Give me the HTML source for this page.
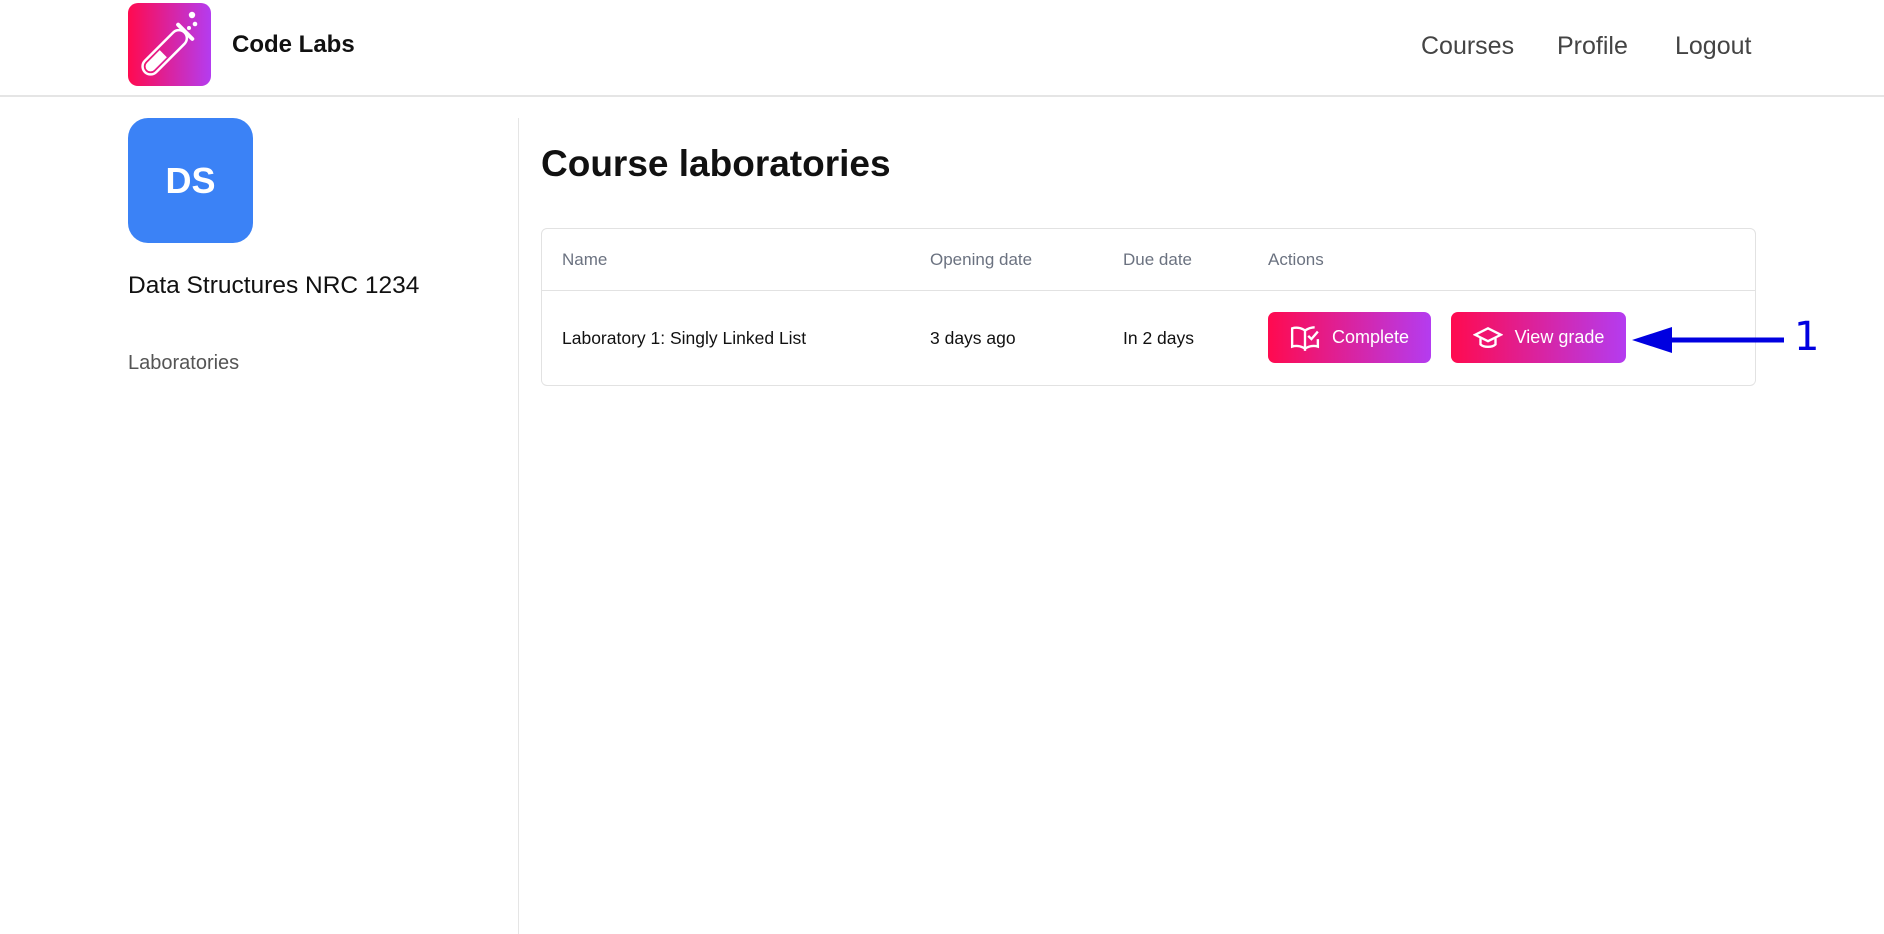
<!DOCTYPE html>
<html><head><style>
*{margin:0;padding:0;box-sizing:border-box}
body{width:1884px;height:934px;background:#fff;font-family:"Liberation Sans","DejaVu Sans",sans-serif;position:relative;overflow:hidden;color:#111}
.abs{position:absolute}
.hdr{left:0;top:0;width:1884px;height:97px;border-bottom:2px solid #e5e5e5}
.logo{left:128px;top:3px;width:83px;height:83px;border-radius:10px;background:linear-gradient(90deg,#ff0a4f,#b43cf0)}
.nav{top:32px;font-size:25px;color:#444}
.ds{left:128px;top:118px;width:125px;height:125px;border-radius:20px;background:#3b82f6;color:#fff;font-weight:bold;font-size:36px;display:flex;align-items:center;justify-content:center}
.tbl{left:541px;top:228px;width:1215px;height:158px;border:1px solid #e2e2e2;border-radius:6px}
.th{top:250px;font-size:17px;color:#6b7280}
.td{top:328px;font-size:17.5px;color:#111}
.btn{top:312px;height:51px;border-radius:7px;background:linear-gradient(90deg,#ff0a4f,#b43cf0);color:#fff;font-size:18px;display:flex;align-items:center;justify-content:center;gap:12px}
</style></head><body>
<div class="abs hdr"></div>
<div class="abs logo"><svg width="83" height="83" viewBox="0 0 83 83" fill="none" stroke="#fff" stroke-width="2.5"><circle cx="64" cy="12" r="3.2" fill="#fff" stroke="none"/><circle cx="67" cy="21" r="2.3" fill="#fff" stroke="none"/><circle cx="61" cy="25" r="2" fill="#fff" stroke="none"/>
<g transform="translate(-4 5) rotate(45 40 45)"><rect x="32" y="16" width="16" height="56" rx="8" ry="8" fill="none"/><rect x="28" y="13" width="24" height="4" rx="2" fill="#fff" stroke="none"/><path d="M35 46 H45 V64 a5 5 0 0 1 -10 0 Z" fill="#fff" stroke="none"/></g></svg></div>
<div class="abs" style="left:232px;top:31px;font-size:24px;font-weight:bold">Code Labs</div>
<div class="abs nav" style="left:1421px">Courses</div>
<div class="abs nav" style="left:1557px">Profile</div>
<div class="abs nav" style="left:1675px">Logout</div>
<div class="abs" style="left:518px;top:118px;width:1px;height:816px;background:#e5e5e5"></div>
<div class="abs ds">DS</div>
<div class="abs" style="left:128px;top:272px;font-size:24.5px">Data Structures NRC 1234</div>
<div class="abs" style="left:128px;top:352px;font-size:20px;color:#555">Laboratories</div>
<div class="abs" style="left:541px;top:143px;font-size:37px;font-weight:bold">Course laboratories</div>
<div class="abs tbl"></div>
<div class="abs" style="left:542px;top:290px;width:1213px;height:1px;background:#e2e2e2"></div>
<div class="abs th" style="left:562px">Name</div>
<div class="abs th" style="left:930px">Opening date</div>
<div class="abs th" style="left:1123px">Due date</div>
<div class="abs th" style="left:1268px">Actions</div>
<div class="abs td" style="left:562px">Laboratory 1: Singly Linked List</div>
<div class="abs td" style="left:930px">3 days ago</div>
<div class="abs td" style="left:1123px">In 2 days</div>
<div class="abs btn" style="left:1268px;width:163px"><svg width="30" height="28" viewBox="0 0 28 26" fill="none" stroke="#fff" stroke-width="2.2"><path d="M14 6 C10 3 5 3 2 4 V21 C5 20 10 20 14 23 C18 20 23 20 26 21 V14 M14 6 V25 M14 6 C17 4 20 3 23 3"/><path d="M17 11 L20 14 L26 7"/></svg>Complete</div>
<div class="abs btn" style="left:1451px;width:175px"><svg width="30" height="26" viewBox="0 0 28 24" fill="none" stroke="#fff" stroke-width="2.2"><path d="M2 9 L14 3 L26 9 L14 15 Z"/><path d="M7 12 V18 C10 21 18 21 21 18 V12"/></svg>View grade</div>
<svg class="abs" style="left:1632px;top:326px" width="155" height="28"><path d="M0 14 L40 1 L40 27 Z" fill="#0000e0"/><rect x="38" y="11.5" width="114" height="5" fill="#0000e0"/></svg>
<div class="abs" style="left:1794px;top:314px;font-size:40px;color:#0000e0;font-family:'DejaVu Sans',sans-serif">1</div>
</body></html>
